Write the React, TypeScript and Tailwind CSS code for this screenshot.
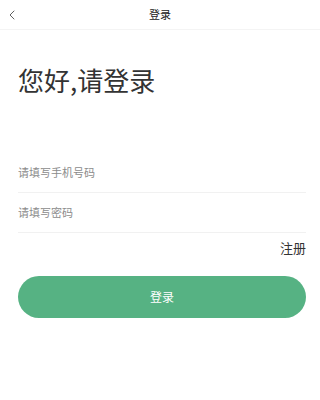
import { ChevronLeft } from "lucide-react";

const font = { fontFamily: '"Noto Sans CJK SC", "Noto Sans", sans-serif' };

const Field = ({ placeholder, type = "text" }: { placeholder: string; type?: string }) => (
  <div className="flex h-10 items-center border-b border-[#f1f1f1]">
    <input
      type={type}
      placeholder={placeholder}
      className="w-full bg-transparent text-[11px] text-[#333] placeholder:text-[#8c8c8c] outline-none"
    />
  </div>
);

const App = () => {
  return (
    <div className="min-h-[400px] w-full bg-white text-[#333]" style={font}>
      <div className="relative flex h-[30px] items-center justify-center border-b border-[#f4f4f4]">
        <button className="absolute left-[4px] top-[7px] text-[#555]">
          <ChevronLeft className="h-4 w-4" strokeWidth={1.4} />
        </button>
        <span className="text-[11px] leading-none text-[#222]">登录</span>
      </div>

      <div className="pl-[18px] pr-[14px]">
        <h1 className="mt-[36px] whitespace-nowrap text-[26px] leading-[28px] text-[#333]">
          您好,请登录
        </h1>

        <div className="mt-[59px]">
          <Field placeholder="请填写手机号码" type="tel" />
          <Field placeholder="请填写密码" type="password" />
        </div>

        <div className="mt-[7px] flex justify-end">
          <span className="text-[13px] leading-4 text-[#333]">注册</span>
        </div>

        <button className="mt-[20px] flex h-[42px] w-full items-center justify-center rounded-full bg-[#56b283]">
          <span className="text-[12px] text-white">登录</span>
        </button>
      </div>
    </div>
  );
};

export default App;
